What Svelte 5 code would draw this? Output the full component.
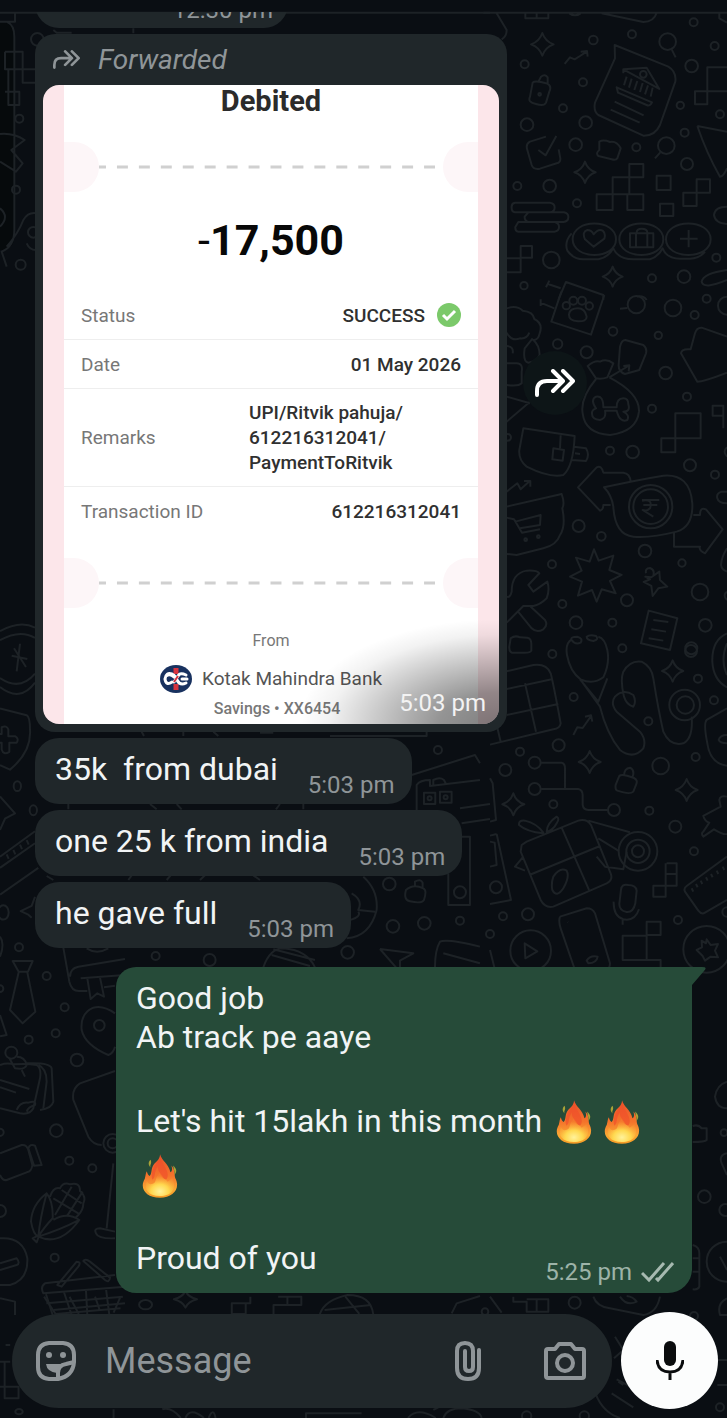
<script>
  const replies = [
    { text: '35k\u00a0 from dubai', time: '5:03 pm' },
    { text: 'one 25 k from india', time: '5:03 pm' },
    { text: 'he gave full', time: '5:03 pm' }
  ];
  let draft = $state('');

  const star = (x, y, r) =>
    `M${x} ${y - r}Q${x + r * 0.25} ${y - r * 0.25} ${x + r} ${y}Q${x + r * 0.25} ${y + r * 0.25} ${x} ${y + r}Q${x - r * 0.25} ${y + r * 0.25} ${x - r} ${y}Q${x - r * 0.25} ${y - r * 0.25} ${x} ${y - r}Z`;
  const ring = (x, y, r) => `M${x - r} ${y}a${r} ${r} 0 1 0 ${r * 2} 0a${r} ${r} 0 1 0 ${-r * 2} 0`;

  const tiles = [
    {
      at: 'translate(0 0) scale(.3333)',
      rings: [[112, 118, 19], [58, 356, 12], [48, 569, 12], [100, 697, 16], [62, 794, 15]],
      stars: [],
      d: 'M0 38H1470M0 65H20Q43 75 43 110V690Q43 740 5 755L20 800M45 38V65H0M15 155H68V208H15V155M25 208V315H58V275H15M68 208V248H110M68 208H110M0 402Q40 398 74 420L34 450L68 490L48 515L0 485M0 625Q30 650 0 680M20 740Q55 700 70 660Q85 635 110 640M80 730Q90 752 110 750M160 90L170 98H215M400 85V100'
    },
    {
      at: 'translate(490 0) scale(.3333)',
      rings: [[104, 193, 12], [310, 120, 13], [426, 103, 12], [611, 67, 12], [674, 138, 12], [605, 198, 19], [279, 247, 12], [219, 325, 12], [111, 374, 19], [287, 368, 19], [571, 316, 11], [690, 343, 12], [584, 398, 12], [257, 434, 19], [439, 442, 12], [591, 492, 18], [82, 558, 12], [179, 558, 19], [261, 610, 12], [184, 780, 25], [102, 857, 11], [486, 835, 12], [582, 830, 19], [679, 773, 12], [533, 125, 25], [529, 437, 25], [149, 283, 4], [460, 223, 10]],
      stars: [[157, 133, 34], [285, 517, 32], [368, 830, 30]],
      d: 'M-20 38H711M20 40L50 90Q50 110 35 118M106 38V55H175V38M140 38V55M238 40Q255 52 272 40M335 40L460 66Q492 65 500 38M688 38V55L711 68M545 148L557 172M511 457L495 475M224 192L240 172L254 178L270 168L291 154M272 155L291 153L293 170M145 246L153 230Q165 220 173 232V252M128 248Q135 240 172 251Q186 258 178 275L168 308Q162 320 138 312Q112 308 120 290ZM374 135L535 200Q560 215 556 245L510 375Q495 408 460 407L325 345Q310 335 315 308L375 175ZM400 208L470 203L508 267ZM400 208L400 220M410 230L402 256M425 236L417 263M442 243L433 270M458 249L450 276M474 256L465 283M488 263L482 290M380 262L486 307Q480 320 470 315L384 278ZM374 305L461 346M362 329L449 368M168 410L120 425Q106 432 112 450L125 495Q130 510 150 506L200 490Q212 488 211 475L206 448M145 450L167 466L199 408M328 425Q340 418 360 426Q380 422 392 445L382 475Q378 482 365 478L325 468Q316 460 328 450ZM368 532H418V492H460V532H418V583H368ZM320 583H368V630H320ZM368 583H460V630H412V583M500 527H542V570H500ZM620 538H660V578H580V618H620ZM510 611H550V648H510ZM711 202H652V313H615V274H711M622 378L711 395M622 378Q650 460 690 530Q700 530 711 505M75 608H180Q194 610 194 622Q194 636 180 637H75Q64 636 65 622Q64 610 75 608ZM115 637H222Q236 640 235 652Q235 665 220 666H115Q103 662 104 650ZM85 666H195Q208 670 207 682Q207 694 193 695H85Q75 694 76 681ZM711 620Q675 620 672 645Q675 670 711 672M50 775H92V738H126V773H92V817H50M248 718C248 655 378 655 378 718S248 780 248 718ZM388 718C388 655 520 655 520 718S388 780 388 718ZM528 718C528 655 662 655 662 718S528 780 528 718ZM245 700Q222 725 232 752Q250 778 280 778H325Q355 772 370 745Q385 778 430 778H480Q505 770 518 745Q530 776 570 776H600Q630 775 645 755M311 740L285 718Q275 695 292 690Q305 690 311 703Q325 685 338 692Q348 700 343 716ZM420 700H490V742H420ZM438 700V742M472 700V742M440 698Q440 686 455 686Q472 686 472 698M570 716H623M596 690V742M711 810Q640 820 635 845Q640 870 711 840M168 862L178 842M174 852L212 865M205 900L228 846L340 885V900M440 890Q460 885 470 900'
    },
    {
      at: 'translate(490 290) scale(.3333)',
      rings: [[439, 44, 26], [549, 54, 25], [650, 26, 12], [614, 75, 12], [711, 47, 27], [369, 124, 13], [505, 136, 11], [203, 162, 14], [290, 187, 18], [527, 249, 19], [591, 320, 12], [486, 356, 12], [360, 482, 12], [428, 486, 19], [600, 526, 18], [675, 554, 12], [482, 650, 65], [482, 650, 52], [266, 708, 18], [334, 739, 13], [465, 783, 19], [186, 823, 12], [576, 819, 11], [630, 906, 25], [411, 931, 18], [217, 942, 12], [258, 998, 19], [367, 998, 12], [646, 1006, 19], [604, 1075, 18], [229, 47, 11], [250, 32, 12], [276, 32, 12], [298, 48, 11], [53, 442, 10], [107, 749, 4], [145, 740, 4]],
      stars: [],
      d: 'M214 5L184 95L303 134L343 15M193 55L152 38M152 28V48M390 56L412 54M237 72Q240 55 264 55Q285 55 290 80Q290 95 264 94Q235 92 237 72M50 55Q80 45 98 62Q130 65 133 87Q160 100 149 130Q145 150 130 150Q148 165 149 195Q140 215 115 218Q98 215 104 175L128 145M50 128Q65 155 90 145Q110 148 118 128M50 168Q72 170 68 190M50 220H80Q100 220 95 245V280Q85 290 50 285M50 320L120 340M50 395L120 335M293 228Q315 210 330 215Q350 205 370 220L352 262Q335 268 318 265ZM318 267Q270 325 278 370Q285 430 360 435Q440 425 447 365Q450 310 358 262M358 262L415 228M400 228L418 226L416 244M406 150L460 165Q472 175 468 190L448 240L405 252Q385 245 386 225L390 170Q395 150 406 150ZM340 352H380Q380 325 400 325Q415 325 415 343Q422 365 400 365Q420 375 412 390Q390 400 380 362H345Q350 385 330 390Q305 388 306 370Q305 360 318 355Q300 330 318 320Q340 315 340 352ZM711 140L635 113Q620 112 615 130L602 178Q575 175 573 190L622 275Q640 275 711 248M556 370H632V445H514V487H556ZM668 347H700V377H668ZM700 377V415M711 472Q697 485 711 500M100 415L254 438Q250 530 220 555Q180 565 110 530Q85 510 88 480ZM212 436L210 475M190 475L222 480L218 512L187 508ZM252 470L288 475Q300 495 288 513L245 510M255 490L270 492M50 605L82 580L92 598L120 572M102 573H121V590M422 575Q420 550 400 548H340Q335 525 320 532L264 592L330 662Q340 660 340 645H362M342 592Q440 570 520 557Q600 550 607 640Q610 710 560 725Q480 745 430 740Q375 735 370 650Q365 615 342 592ZM610 675H630Q630 650 648 658L698 718L645 790Q625 780 630 770L552 770V725M456 630H508M460 645H502M456 632Q490 625 480 655Q470 665 458 660L490 680M50 650L215 612Q225 640 217 655Q228 710 210 735Q200 765 160 775L80 795L50 792M50 683L72 688L96 728L150 718M76 695L152 675L150 705L90 715M711 605H695Q678 610 682 625Q685 640 711 640M312 778L326 812L370 797L358 840L395 855L360 873L377 910L335 898L320 935L306 900L264 917L276 875L240 860L275 842L258 803L299 815ZM468 850Q465 835 480 834Q495 840 490 855M466 860L484 862L508 845L510 870L532 890L505 895L488 918L484 888L461 876L480 868ZM50 920Q60 925 65 905Q65 850 110 842Q140 840 148 850L115 885L130 905L172 875Q180 900 170 925Q150 945 130 948H100L50 998M82 962L125 1015Q140 1030 160 1018Q175 1005 165 990L120 948M476 962L562 985L540 1080L453 1060ZM490 990L535 996M484 1018L528 1025M476 1045L520 1052M711 775Q695 800 693 825Q695 840 711 845M711 905Q697 915 711 930'
    },
    {
      at: 'translate(490 600) scale(.3333)',
      rings: [[187, 162, 12], [397, 145, 12], [603, 153, 18], [624, 236, 12], [584, 315, 46], [586, 315, 26], [672, 301, 12], [251, 291, 12], [475, 364, 12], [206, 436, 18], [90, 455, 12], [46, 510, 18], [134, 488, 18], [134, 567, 18], [372, 630, 18], [512, 498, 25], [617, 471, 12], [190, 613, 12], [478, 632, 12], [556, 680, 18], [612, 754, 12], [444, 754, 58], [444, 754, 35], [444, 754, 18], [18, 862, 18], [39, 949, 12], [114, 943, 18], [564, 960, 12], [122, 1052, 61], [650, 1048, 70], [0, 1002, 12], [711, 936, 14]],
      stars: [[548, 213, 32], [299, 486, 33], [590, 570, 33], [70, 613, 33]],
      d: 'M62 115Q75 105 90 112L112 113Q125 115 124 135V152Q120 160 95 158H65Q57 155 58 140ZM245 120Q240 110 262 110Q280 115 272 128Q255 135 245 120ZM290 110Q300 102 318 108Q328 118 310 123Q290 120 290 110ZM245 118Q225 130 231 165Q240 215 272 238Q310 255 340 232Q360 190 352 150Q345 115 325 110M270 238L325 305L352 235M272 240L330 320Q350 400 390 450Q430 480 460 445Q470 420 450 395L380 335Q360 310 375 290Q400 265 430 285Q440 305 430 320Q410 315 402 290Q390 240 400 215Q420 180 455 185Q485 200 490 235Q505 330 520 395Q540 440 580 430Q610 415 605 350M250 405L262 382L278 384L302 350M285 350L303 346L307 365M50 214L130 195Q170 190 182 220Q190 250 212 370Q210 385 190 388L0 434M50 267L185 238M50 345L205 312M105 250L138 395M20 375L32 425M711 100Q665 120 667 185Q670 240 711 262M711 130Q690 180 711 225M711 325L650 360Q640 370 652 430Q660 490 711 497M711 405Q690 405 686 420Q690 430 711 430M152 488H215Q225 490 225 505V567M152 567H265Q278 570 278 585V615Q280 630 295 630H354M402 528Q402 505 420 503Q435 510 428 530M388 528Q395 520 432 534Q445 540 438 555L430 575Q420 585 382 572Q375 570 377 555ZM0 535L8 550L18 660L0 665M711 590Q690 585 688 600L692 620L640 648Q645 665 658 668L640 695Q632 700 640 710L672 688Q700 705 711 702M160 700Q110 695 87 675Q85 660 105 662Q140 670 160 698ZM170 696Q170 670 200 650Q210 655 200 670Q190 690 170 696ZM95 735L110 725L265 662Q290 655 303 675L362 820Q370 840 350 850L190 920Q165 925 152 900L92 755ZM215 683L297 870M118 825L330 738M190 830Q210 800 230 812Q240 830 220 865Q200 895 187 870Q183 850 190 830ZM295 662L420 697M325 715L385 752M320 770L345 800L400 808L410 755M20 702L0 707M20 702L63 900L0 912M0 725L14 728L20 795L0 800M100 770L75 800L105 812M530 790H560V857H490V890H527V790M527 822H560M711 770L590 858Q580 865 585 875L625 932Q635 945 645 938L711 900M605 865L610 875M618 852L623 862M632 842L637 852M648 832L653 842M663 822L668 832M680 812L685 822M698 800L703 810M393 870Q395 850 415 855Q438 855 440 872L436 910Q430 938 410 936Q388 932 388 912ZM371 905Q370 950 400 958Q435 965 447 928M398 960V974M210 950L290 925Q308 925 315 940L360 1090Q360 1108 345 1110M210 950Q205 965 212 985L255 1110M233 966L234 967M290 1082Q300 1065 323 1070Q320 1090 295 1090ZM398 1007H470V965H512V1005H470V1080H398ZM470 1080H512V1110M104 1030L142 1054L106 1075ZM650 1018L662 1035L684 1032L675 1052L684 1072L662 1070L645 1082L638 1068L620 1050L636 1042L635 1022L648 1030ZM0 1050L15 1110'
    },
    {
      at: 'translate(0 935) scale(.3333)',
      rings: [[57, 37, 12], [140, 123, 12], [194, 217, 12], [298, 271, 16], [167, 295, 12], [86, 314, 12], [231, 375, 19], [169, 587, 19], [208, 677, 12], [277, 700, 12], [338, 625, 28], [338, 625, 15], [164, 968, 12], [0, 161, 10], [0, 592, 11], [0, 828, 18], [34, 353, 18]],
      stars: [],
      d: 'M38 78H98L84 110H56ZM56 112L30 225L68 265L106 230L82 112M0 5Q15 25 0 65M0 240L20 300L0 304M190 38L208 140Q215 170 240 168H262M375 72L235 95Q210 100 210 125M375 120L242 130M262 130L272 192L292 175L312 185L300 127M312 157L345 152M260 40Q290 60 325 40M345 235Q310 210 280 218Q240 235 245 285Q255 330 325 360Q340 355 345 335M0 390Q20 382 42 388Q80 385 110 390Q125 400 120 430L100 520Q90 540 60 535L0 520M75 385H100Q150 385 155 400L160 500Q155 520 120 525M115 390Q140 400 140 440L130 520M0 435L88 462M0 457L48 473M28 370L45 400Q75 405 80 390Q75 365 50 365M65 405L75 425M50 525Q60 500 85 503Q110 495 105 510Q85 515 80 530M345 408L240 445Q215 460 220 495L265 605Q280 630 305 630M0 655L65 630Q80 628 85 645L97 690Q95 710 80 712L20 735Q8 738 0 720M85 640Q90 625 105 632L125 690L102 692ZM140 775Q95 810 93 860Q100 900 115 905Q180 935 238 855Q200 830 160 855M140 775Q160 800 158 850Q130 880 115 905Q120 850 140 775ZM115 905Q180 885 238 855M98 910L118 900L110 922ZM150 785Q160 755 180 760Q190 740 210 748Q240 740 240 768Q260 785 250 805Q250 825 235 840L225 850M160 790L235 835M185 765L245 805M165 840L215 755M200 845L248 770M340 685L320 880M345 890L300 880Q280 880 288 895Q295 912 345 910M0 910Q70 905 82 970Q85 1035 30 1050H0M0 985L50 970Q62 985 50 990L0 1005M172 1050L230 980Q245 980 235 995L185 1055ZM250 978Q255 970 270 980L330 1028Q328 1045 315 1035ZM345 1020L135 1045Q120 1055 130 1075L375 1055M138 1078L158 1140M192 1072L215 1140M258 1068L262 1140M318 1062L328 1140M160 1125L375 1105M0 1090L45 1100V1140'
    },
    {
      at: 'translate(0 600) scale(.3333 .4464)',
      rings: [[52, 417, 11], [100, 471, 11], [10, 700, 16]],
      stars: [],
      d: 'M105 62Q60 45 0 70M105 185Q60 230 0 195M105 85Q60 65 0 90M105 165Q60 205 0 175M35 125L82 132M60 98L50 160M42 108L78 150M0 243L80 258Q90 262 90 290Q95 340 30 380L0 370M0 300H5V285Q20 280 25 290V305H45Q58 310 50 320H28V340Q10 348 5 335V320H0M0 440L45 478L15 490L0 515M0 575L105 518M0 600L105 545M0 660L115 600M20 570L26 580M40 560L46 570M60 548L66 558M80 538L86 548M105 665L95 685L62 697L85 705L95 712'
    },
    {
      at: 'translate(0 730) scale(.3333)',
      rings: [[1314, 60, 12], [1168, 462, 19], [1179, 589, 19], [1273, 580, 19], [1380, 572, 12], [1380, 487, 18], [1043, 667, 19], [629, 690, 18], [467, 678, 12], [1289, 205, 6], [1337, 202, 6]],
      stars: [],
      d: 'M1235 135L1425 75L1440 100M1250 240V165Q1260 150 1290 150V168L1440 150M1300 165V150Q1320 140 1332 150L1338 162M1272 188H1306V222H1272ZM1320 185H1355V218H1320ZM1380 235L1470 222M1385 280L1470 267M1350 320H1410V525H1345V430M1245 470V455Q1262 445 1268 458V475M1218 480Q1240 460 1270 475Q1282 480 1272 510Q1265 522 1230 514Q1210 510 1218 480ZM1090 440Q1135 480 1130 540Q1110 620 1040 625M1055 490Q1090 510 1075 540L1125 545M1050 570Q1085 560 1075 545M1140 657L1240 670L1200 692V712M1140 657L1188 712M1305 712Q1305 660 1320 635Q1340 625 1440 650M1330 670L1440 700M790 712Q810 655 850 655Q920 660 945 712M820 658L945 690M815 675L930 708M425 5L432 18M550 5V18M640 5L655 18M780 8H820M990 18H1280V5M205 222V238M450 222L470 238M530 222L545 238M840 222L828 238M910 222V238M140 438L160 450M385 450L395 436M500 450L512 436M600 450L615 436M760 436L780 450'
    },
    {
      at: 'translate(430 1290) scale(.3333)',
      rings: [[434, 38, 18], [792, 78, 12], [870, 352, 12], [290, 378, 14], [463, 378, 14], [165, 65, 10]],
      stars: [],
      d: 'M65 70L80 40L150 18M180 20L215 68M250 20V35H290V65H355V28H290M320 28V65M490 20Q500 50 540 55L640 75Q680 70 690 20M570 20Q590 50 620 35Q610 20 590 18M891 25Q860 40 870 75H891M555 140L580 180L552 205M862 210H891M862 285H891M490 290Q510 365 570 384M545 310L610 352M560 268L620 300L660 345M40 384Q50 355 95 355Q150 360 155 384M565 275L580 285M10 360L25 352'
    },
    {
      at: 'translate(0 1290) scale(.4636 .3333)',
      rings: [[314, 44, 14], [41, 365, 8]],
      stars: [[400, 28, 25]],
      d: 'M95 20L120 72M100 40L265 20M150 20L170 72M205 20L215 60M260 20L245 68M120 72L260 55M500 72V40H540V20M500 40V72H530V40M590 72V45H620V20M600 20H650V45H620M690 72Q700 30 750 15Q800 15 805 72M745 20L775 72M700 60L800 45M12 165H22M0 215H22M10 215V325H40V290H0M245 358V384M350 358Q370 350 390 384M400 384Q410 350 440 384M450 384Q460 350 465 384M660 384V370H780M880 384Q900 350 940 384'
    },
    {
      at: 'translate(660 1080) scale(.3333)',
      rings: [[133, 350, 19], [192, 158, 10], [196, 390, 18], [200, 545, 60]],
      stars: [],
      d: 'M201 5Q170 15 165 50Q170 85 201 85M98 138Q115 132 125 145H140V180Q135 186 98 186M201 220Q175 225 185 250L201 285M98 495Q118 500 118 520V620Q115 630 98 628M98 535H118M98 575H118M180 530L201 570'
    }
  ];
</script>

{#snippet forwardArrow()}
  <svg class="fwd" viewBox="0 0 40 28" aria-hidden="true">
    <path d="M2 26V22Q2 12 12 12H26M18 2L28 12L18 22M28 2L38 12L28 22" />
  </svg>
{/snippet}

{#snippet tearLine()}
  <div class="tear">
    <i></i>
    <svg viewBox="0 0 345 4" preserveAspectRatio="none" aria-hidden="true"><path d="M0 2H345" /></svg>
    <i></i>
  </div>
{/snippet}

{#snippet flame()}
  <svg class="flame" viewBox="0 0 40 46" role="img" aria-label="fire">
    <defs>
      <linearGradient id="fire-outer" x1="0" y1="0" x2="0" y2="1">
        <stop offset="0" stop-color="#e8502a" />
        <stop offset=".5" stop-color="#f4742b" />
        <stop offset=".8" stop-color="#fba834" />
        <stop offset="1" stop-color="#f59a25" />
      </linearGradient>
      <radialGradient id="fire-inner" cx=".5" cy=".8" r=".7">
        <stop offset="0" stop-color="#fff29a" />
        <stop offset=".45" stop-color="#ffd84f" />
        <stop offset="1" stop-color="#fb9a33" stop-opacity=".2" />
      </radialGradient>
    </defs>
    <path fill="url(#fire-outer)" d="M20 0C22 7 29 10 31 19C33 18 33 15 32 12C36 16 35 21 36 25C42 36 34 46 20 46C5 46-2 36 4 26C5 22 5 20 6 18C7 20 7 22 9 23C12 20 10 15 14 10C17 7 20 5 20 0Z" />
    <path fill="#ef4f2b" opacity=".65" d="M20 2C21 9 26 12 28 20C29 27 25 28 23 24C21 20 17 18 18 13C13 18 16 24 12 27C10 21 13 13 16 10C18 7 20 6 20 2Z" />
    <path fill="url(#fire-inner)" d="M20 20C21 26 26 25 28 29C31 27 32 26 33 25C38 37 32 44 20 44C7 44 3 37 6 28C8 32 10 32 13 31C17 29 14 24 20 20Z" />
    <path fill="#a9a337" d="M10 6C7 9 8 12 10 14C9 11 12 10 10 6ZM34 12C38 16 38 19 35 22C36 18 34 16 34 12Z" />
  </svg>
{/snippet}

<main>
  <svg class="wallpaper" viewBox="0 0 727 1418" preserveAspectRatio="xMidYMin slice" aria-hidden="true">
    <rect class="shade" x="-20" y="22" width="34" height="228" rx="12" />
    {#each tiles as tile}
      <g transform={tile.at}>
        <path d={tile.d} />
        {#each tile.rings as r}<path d={ring(...r)} />{/each}
        {#each tile.stars as s}<path d={star(...s)} />{/each}
      </g>
    {/each}
  </svg>

  <section class="chat" aria-label="Conversation">
    <div class="clip">
      <div class="bubble earlier"><time>12:30 pm</time></div>
    </div>

    <div class="shared">
      <article class="bubble media">
        <p class="forwarded">{@render forwardArrow()}<em>Forwarded</em></p>
        <div class="receipt">
          <h2>Debited</h2>
          {@render tearLine()}
          <p class="amount"><span>-</span>17,500</p>
          <dl>
            <div><dt>Status</dt><dd>SUCCESS
              <svg class="ok" viewBox="0 0 24 24" aria-hidden="true"><circle cx="12" cy="12" r="12" /><path d="M6 12L10 16L18 8" /></svg></dd></div>
            <div><dt>Date</dt><dd>01 May 2026</dd></div>
            <div><dt>Remarks</dt><dd class="remarks">UPI/Ritvik pahuja/<br />612216312041/<br />PaymentToRitvik</dd></div>
            <div><dt>Transaction ID</dt><dd>612216312041</dd></div>
          </dl>
          {@render tearLine()}
          <p class="from">From</p>
          <p class="bank">
            <svg viewBox="0 0 32 28" aria-hidden="true">
              <ellipse cx="16" cy="14" rx="16" ry="14" fill="#18315f" />
              <path d="M16 3V9M16 19V25" stroke="#d8343f" stroke-width="5" />
              <path d="M12 17Q6 21 5 14Q6 7 12 9Q16 11 17 15Q20 21 26 18M26 10Q20 7 18 11L14 17M22 14H27M6 11Q10 8 14 12" fill="none" stroke="#fff" stroke-width="3" stroke-linecap="round" />
              <path d="M18 11L14 17" stroke="#d8343f" stroke-width="2" />
            </svg>
            Kotak Mahindra Bank
          </p>
          <p class="account">Savings • XX6454</p>
          <time>5:03 pm</time>
        </div>
      </article>
      <button class="share" type="button" aria-label="Forward">{@render forwardArrow()}</button>
    </div>

    {#each replies as reply}
      <article class="bubble text"><p>{reply.text}</p><time>{reply.time}</time></article>
    {/each}

    <article class="mine">
      <svg class="tail" viewBox="0 0 32 24" aria-hidden="true"><path d="M0 0H28Q34 0 30 4L18 18V24H0Z" /></svg>
      <p>Good job<br />Ab track pe aaye</p>
      <p class="fiery">Let's hit 15lakh in this month {@render flame()}{@render flame()}{@render flame()}</p>
      <footer>
        <p>Proud of you</p>
        <time>5:25 pm
          <svg class="ticks" viewBox="0 0 33 22" role="img" aria-label="Delivered"><path d="M1 12L8 19L23 2M15 17L17 19L32 2" /></svg>
        </time>
      </footer>
    </article>
  </section>

  <form class="composer" onsubmit={(e) => e.preventDefault()}>
    <div class="field">
      <button type="button" aria-label="Stickers">
        <svg class="sticker" viewBox="0 0 42 42" aria-hidden="true">
          <path class="line" d="M14 3H28Q39 4 39 15V22Q38 36 23 39H14Q3 38 3 27V15Q3 4 14 3ZM23 39V33Q23 25 31 24L39 22" />
          <path class="solid" d="M11 24H27Q23 27 22 33Q12 32 11 24Z" />
          <circle class="solid" cx="14" cy="15" r="3" /><circle class="solid" cx="28" cy="15" r="3" />
        </svg>
      </button>
      <input type="text" placeholder="Message" aria-label="Message" bind:value={draft} />
      <button type="button" aria-label="Attach">
        <svg class="clip-icon" viewBox="0 0 28 42" aria-hidden="true"><path class="line" d="M25 10V28Q25 39 14 39Q3 39 3 28V11Q3 3 11 3Q19 3 19 11V27Q19 31 15 31Q11 31 11 27V11" /></svg>
      </button>
      <button type="button" aria-label="Camera">
        <svg class="camera" viewBox="0 0 42 38" aria-hidden="true"><path class="line" d="M4 7H11L15 2H27L31 7H38Q40 7 40 9V34Q40 36 38 36H4Q2 36 2 34V9Q2 7 4 7Z" /><circle class="line" cx="21" cy="21" r="8" /></svg>
      </button>
    </div>
    <button class="mic" type="button" aria-label="Record voice message">
      <svg viewBox="0 0 28 40" aria-hidden="true"><rect x="8" y="0" width="12" height="25" rx="6" /><path d="M1 19Q2 31 14 31Q26 31 27 19M14 31V39" /></svg>
    </button>
  </form>
</main>

<style>
  :global(body) { margin: 0; background: #0a0e13; }
  * { box-sizing: border-box; }
  main {
    position: relative;
    min-height: 100vh;
    display: flex;
    flex-direction: column;
    overflow: hidden;
    background: #0a0e13;
    font-family: Roboto, "Liberation Sans", sans-serif;
    color: #f1f4f5;
  }
  p, h2, dl, dd { margin: 0; }
  button { border: 0; padding: 0; background: none; color: inherit; display: flex; align-items: center; justify-content: center; flex: none; }
  svg { flex: none; }

  .wallpaper { position: absolute; inset: 0; width: 100%; height: 100%; }
  .wallpaper path { fill: none; stroke: #1d2226; stroke-width: 2; vector-effect: non-scaling-stroke; stroke-linejoin: round; }
  .wallpaper .shade { fill: #060a0c; }

  .chat { position: relative; flex: 1; display: flex; flex-direction: column; align-items: flex-start; gap: 6px; padding: 12px 35px 0; }
  .bubble { background: #20272a; border-radius: 24px; }
  .clip { height: 16px; overflow: hidden; display: flex; align-items: flex-end; }
  .earlier { width: 253px; height: 66px; padding: 0 15px; display: flex; align-items: flex-end; justify-content: flex-end; }
  .bubble time { font-size: 24px; line-height: 28px; color: #8f9598; white-space: nowrap; }
  .earlier time { padding-bottom: 4px; }

  .shared { display: flex; align-items: center; gap: 16px; }
  .media { width: 472px; padding: 0 8px 8px; border-radius: 20px; }
  .forwarded { height: 51px; display: flex; align-items: center; gap: 18px; padding-left: 10px; font-size: 28px; color: #8f9598; }
  .fwd { fill: none; stroke: currentColor; stroke-width: 4; stroke-linecap: round; stroke-linejoin: round; }
  .forwarded .fwd { width: 27px; height: 19px; }
  .share { width: 64px; height: 64px; border-radius: 50%; background: #0d1517; color: #fff; }
  .share .fwd { width: 40px; height: 28px; }

  .receipt {
    position: relative;
    height: 639px;
    overflow: hidden;
    padding: 0 21px;
    border-radius: 16px;
    background: linear-gradient(90deg, #fce6ea 21px, #fff 21px calc(100% - 21px), #fce6ea calc(100% - 21px));
    color: #303030;
    text-align: center;
  }
  .receipt::after {
    content: "";
    position: absolute;
    inset: 0;
    background: radial-gradient(ellipse 200px 105px at 100% 100%, rgb(0 0 0 / .5) 0%, rgb(0 0 0 / .42) 30%, rgb(0 0 0 / .22) 60%, rgb(0 0 0 / .05) 85%, transparent 100%);
  }
  h2 { font-size: 29px; line-height: 33px; font-weight: 700; color: #2b2b2b; }
  .tear { height: 50px; margin-top: 24px; display: flex; align-items: center; justify-content: space-between; }
  .tear i { width: 35px; height: 50px; background: #fdf6f8; border-radius: 0 25px 25px 0; }
  .tear i:last-child { border-radius: 25px 0 0 25px; }
  .tear svg { flex: 1; min-width: 0; height: 4px; }
  .tear path { stroke: #d0d0d0; stroke-width: 3; stroke-dasharray: 11 11; stroke-dashoffset: 4; }
  .amount { margin-top: 22px; font-size: 43px; line-height: 52px; font-weight: 700; color: #080808; }
  .amount span { font-weight: 400; }
  dl { margin-top: 25px; font-size: 19px; line-height: 25px; }
  dl div { display: flex; align-items: center; justify-content: space-between; min-height: 49px; padding: 11px 17px; border-bottom: 1px solid #eee; }
  dl div:last-child { border: 0; }
  dt { color: #777; }
  dd { display: flex; align-items: center; gap: 12px; font-weight: 500; }
  .remarks { display: block; text-align: left; width: 212px; }
  .ok { width: 24px; height: 24px; fill: #7bc96a; }
  .ok path { fill: none; stroke: #fff; stroke-width: 3; }
  dl + .tear { margin-top: 22px; }
  .from { margin-top: 23px; font-size: 16px; line-height: 20px; color: #777; }
  .bank { margin-top: 14px; display: flex; justify-content: center; align-items: center; gap: 10px; font-size: 19px; line-height: 28px; color: #555; }
  .bank svg { width: 32px; height: 28px; }
  .account { margin: 6px 0 0 12px; font-size: 16px; line-height: 20px; font-weight: 500; color: #777; }
  .receipt time { position: absolute; z-index: 1; right: 13px; bottom: 7px; color: #f3f3f3; }

  .text { display: flex; align-items: flex-end; gap: 30px; min-height: 66px; padding: 8px 17px 5px 20px; }
  .text p { font-size: 32px; line-height: 38px; align-self: flex-start; padding-top: 4px; }

  .mine {
    position: relative;
    align-self: flex-end;
    width: calc(100% - 81px);
    max-width: 577px;
    margin-top: 13px;
    padding: 12px 18px 15px 20px;
    border-radius: 20px 0 24px 20px;
    background: #264b39;
    font-size: 32px;
    line-height: 39px;
  }
  .tail { position: absolute; top: 0; right: -14px; width: 32px; height: 24px; fill: #264b39; }
  .fiery { margin: 37px 0; line-height: 54px; }
  .flame { width: 38px; height: 44px; margin: 0 5px; vertical-align: -12px; }
  footer { display: flex; justify-content: space-between; align-items: flex-end; }
  footer time { display: flex; align-items: center; gap: 9px; height: 28px; margin-bottom: -8px; font-size: 24px; line-height: 28px; color: #9db3a8; }
  .ticks { width: 33px; height: 22px; fill: none; stroke: #a6b9b0; stroke-width: 3; }

  .composer { position: relative; display: flex; align-items: center; gap: 9px; padding: 16px 9px 9px 12px; }
  .field { flex: 1; min-width: 0; height: 94px; display: flex; align-items: center; padding: 0 26px 0 23px; border-radius: 47px; background: #20272a; color: #8f9598; }
  .field input { flex: 1; min-width: 0; margin: 0 24px 0 28px; border: 0; padding: 0; outline: 0; background: none; color: #f1f4f5; font: 36px/48px Roboto, "Liberation Sans", sans-serif; }
  .field input::placeholder { color: #8f9598; opacity: 1; }
  .line { fill: none; stroke: currentColor; stroke-width: 4; stroke-linejoin: round; stroke-linecap: round; }
  .solid { fill: currentColor; }
  .sticker { width: 42px; height: 42px; }
  .clip-icon { width: 28px; height: 42px; }
  .camera { width: 42px; height: 38px; margin-left: 62px; }
  .mic { width: 97px; height: 97px; border-radius: 50%; background: #fcfdfd; }
  .mic svg { width: 28px; height: 40px; }
  .mic rect { fill: #0a0c0d; }
  .mic path { fill: none; stroke: #0a0c0d; stroke-width: 3; }
</style>
